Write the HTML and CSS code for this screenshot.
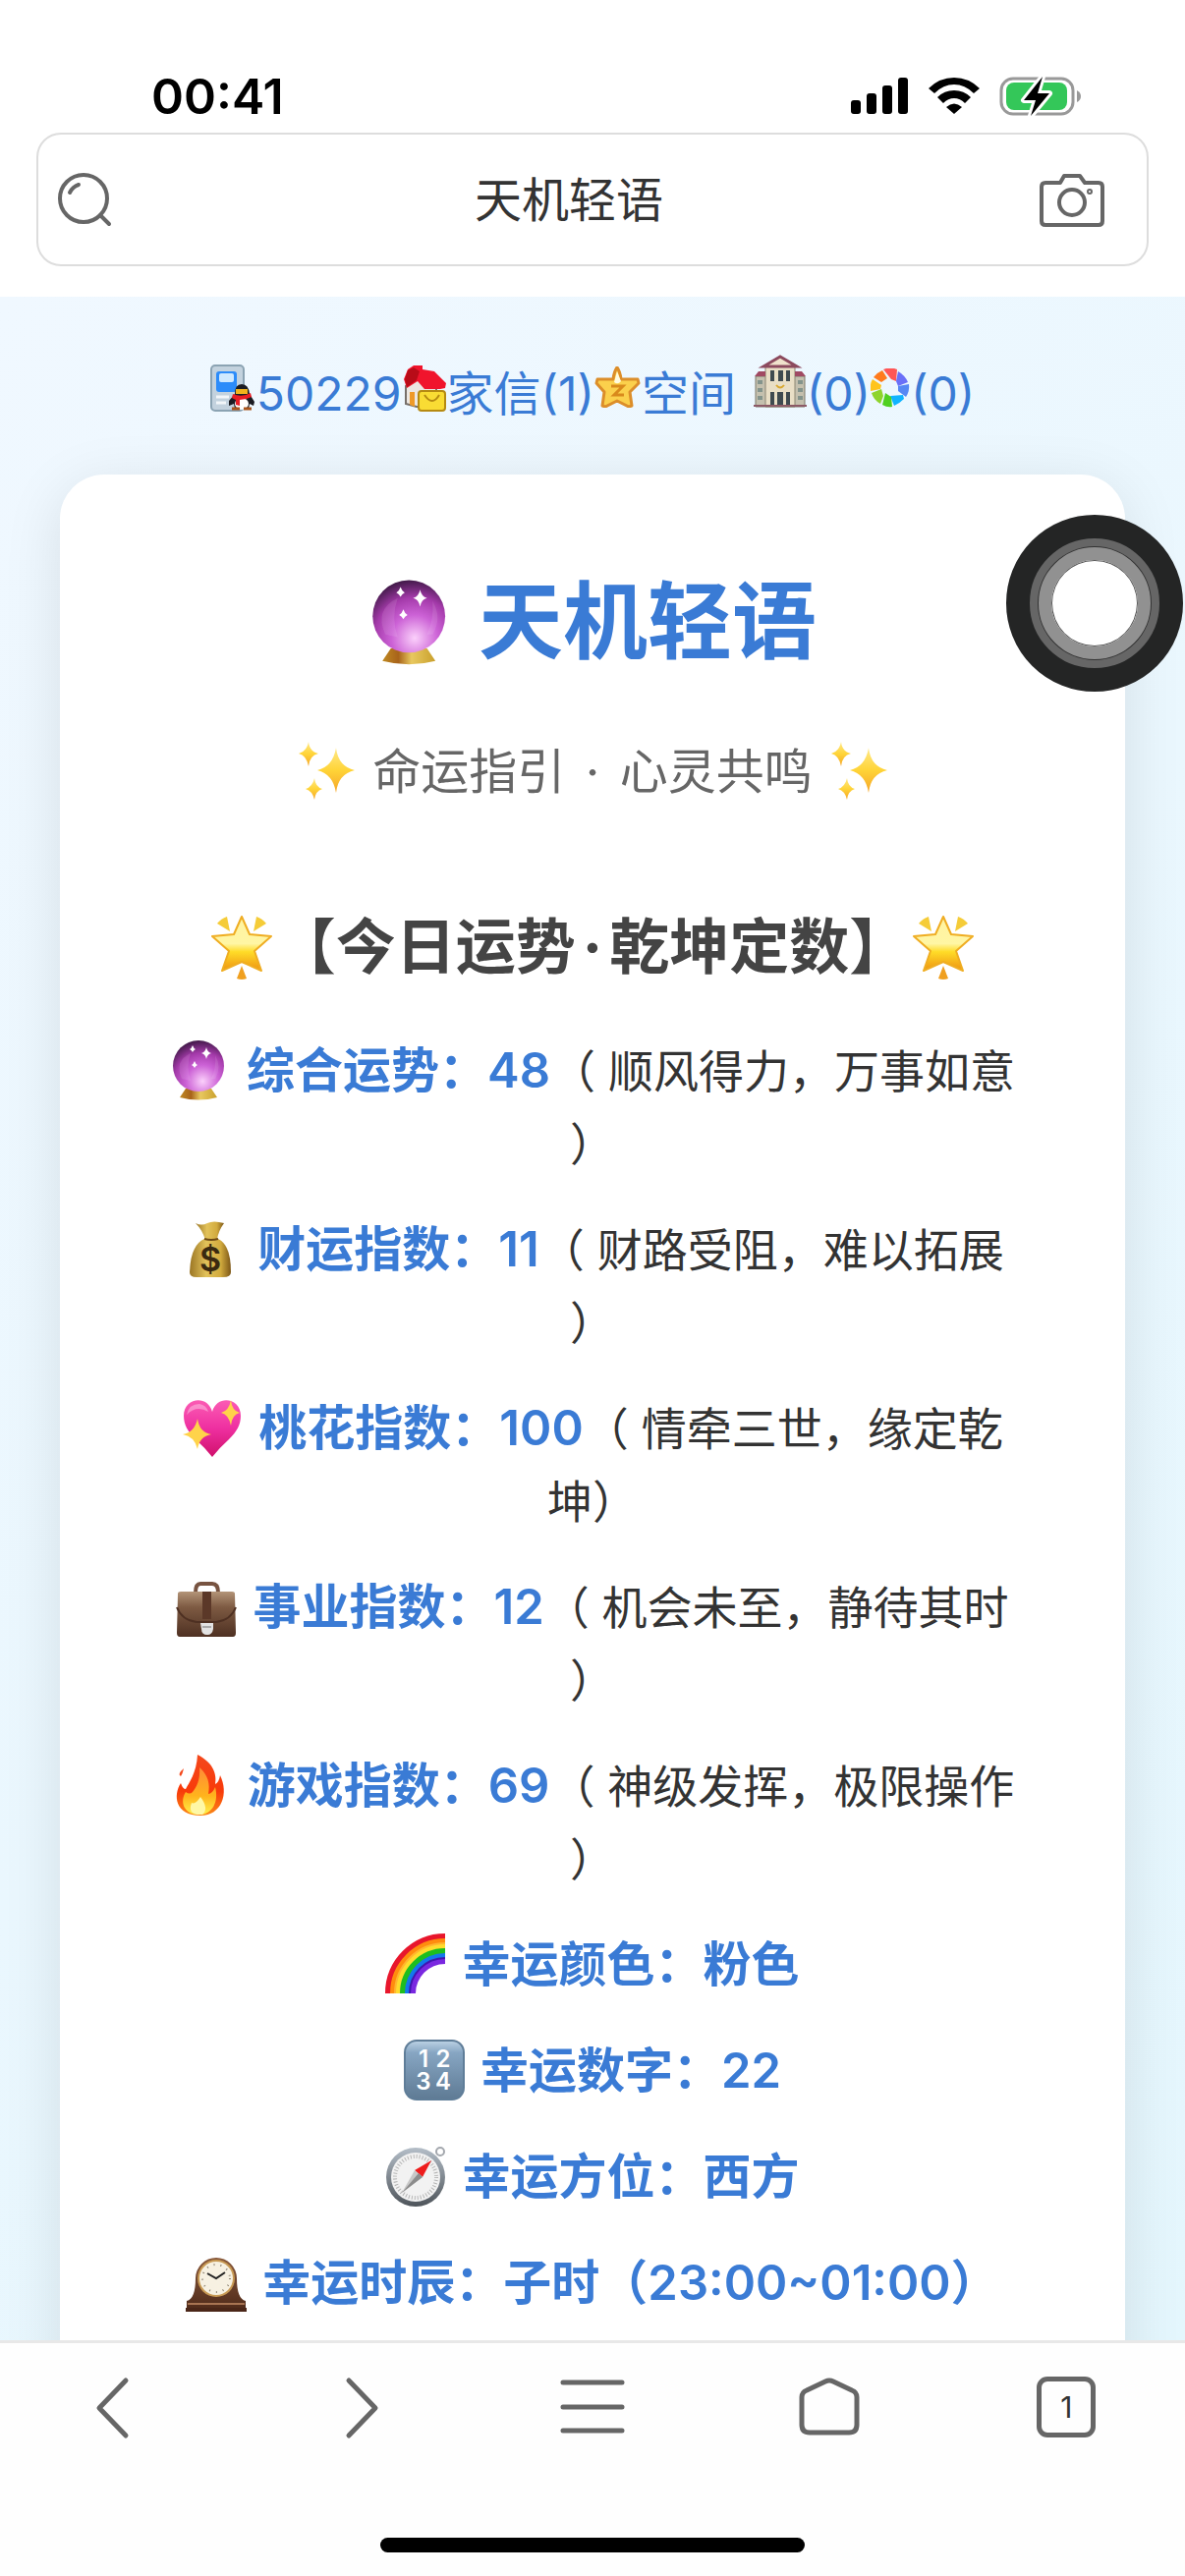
FILE: index.html
```html
<!DOCTYPE html>
<html lang="zh-CN">
<head>
    <meta charset="UTF-8">
    <meta name="viewport" content="width=device-width, initial-scale=1.0">
    <title>天机轻语</title>
    <link rel="stylesheet" href="styles.css">
</head>
<body>
    <!-- shared emoji drawings -->
    <svg class="defs" width="0" height="0" aria-hidden="true">
        <defs>
            <radialGradient id="ballFill" cx="58%" cy="80%" r="80%">
                <stop offset="0" stop-color="#fbd0fb"/>
                <stop offset=".4" stop-color="#cc62d6"/>
                <stop offset=".7" stop-color="#a43aaa"/>
                <stop offset="1" stop-color="#431a4a"/>
            </radialGradient>
            <linearGradient id="gold" x1="0" x2="1" y1="0" y2="0">
                <stop offset="0" stop-color="#c08a22"/>
                <stop offset=".3" stop-color="#a8631a"/>
                <stop offset=".55" stop-color="#e8c860"/>
                <stop offset="1" stop-color="#c9a02c"/>
            </linearGradient>
            <linearGradient id="starFill" x1="0" x2="0" y1="0" y2="1">
                <stop offset="0" stop-color="#fff3a0"/>
                <stop offset=".5" stop-color="#fff6a4"/>
                <stop offset=".65" stop-color="#ffdc28"/>
                <stop offset="1" stop-color="#ee9310"/>
            </linearGradient>
            <linearGradient id="heartFill" x1="0" x2="0" y1="0" y2="1">
                <stop offset="0" stop-color="#fb5cb4"/>
                <stop offset=".5" stop-color="#ee2fa0"/>
                <stop offset="1" stop-color="#d0106c"/>
            </linearGradient>
            <linearGradient id="sparkFill" x1="0" x2="0" y1="0" y2="1">
                <stop offset="0" stop-color="#ffe98a"/>
                <stop offset=".5" stop-color="#ffd437"/>
                <stop offset="1" stop-color="#f5a52a"/>
            </linearGradient>
            <linearGradient id="bagFill" x1="0" x2="1" y1="0" y2="0">
                <stop offset="0" stop-color="#9a7524"/>
                <stop offset=".4" stop-color="#e2c25a"/>
                <stop offset=".75" stop-color="#d2ab3e"/>
                <stop offset="1" stop-color="#7c5616"/>
            </linearGradient>
            <linearGradient id="caseFill" x1="0" x2="0" y1="0" y2="1">
                <stop offset="0" stop-color="#b39478"/>
                <stop offset=".35" stop-color="#7d5a42"/>
                <stop offset="1" stop-color="#4e3022"/>
            </linearGradient>
            <linearGradient id="fireFill" x1="0" x2="0" y1="0" y2="1">
                <stop offset="0" stop-color="#f4481c"/>
                <stop offset=".6" stop-color="#f83a0a"/>
                <stop offset="1" stop-color="#fb8a16"/>
            </linearGradient>
            <linearGradient id="fireInner" x1="0" x2="0" y1="0" y2="1">
                <stop offset="0" stop-color="#ff8a38"/>
                <stop offset=".6" stop-color="#ffb31c"/>
                <stop offset="1" stop-color="#fff04a"/>
            </linearGradient>
            <linearGradient id="keyFill" x1="0" x2="0" y1="0" y2="1">
                <stop offset="0" stop-color="#b8cfe2"/>
                <stop offset=".2" stop-color="#86a5c2"/>
                <stop offset="1" stop-color="#5f7b95"/>
            </linearGradient>
            <linearGradient id="steel" x1="0" x2="0" y1="0" y2="1">
                <stop offset="0" stop-color="#b4bec8"/>
                <stop offset="1" stop-color="#4e545a"/>
            </linearGradient>
            <linearGradient id="woodFill" x1="0" x2="0" y1="0" y2="1">
                <stop offset="0" stop-color="#8a5a3c"/>
                <stop offset="1" stop-color="#4f2a1a"/>
            </linearGradient>
        </defs>

        <symbol id="crystal-ball" viewBox="0 0 62 62">
            <path d="M16 50h26l6 9q-19 5-38 0z" fill="url(#gold)"/>
            <circle cx="29" cy="27" r="26" fill="url(#ballFill)"/>
            <path d="M12 40q-8-18 9-26-5 14 0 28zM46 40q7-12 0-24 1 14-4 24z" fill="#fff" opacity=".1"/>
            <path d="M37 8q1 5 5 6-4 1-5 6-1-5-5-6 4-1 5-6zM23 6q1 3 3 4-2 1-3 3-1-2-3-3 2-1 3-4zM25 22q1 3 3 4-2 1-3 3-1-2-3-3 2-1 3-4z" fill="#fff"/>
        </symbol>

        <symbol id="sparkles" viewBox="0 0 62 62">
            <path d="M41 7q2 19 19 23-17 4-19 23-3-19-19-23 16-4 19-23z" fill="url(#sparkFill)"/>
            <path d="M13 1q1 10 10 12-9 2-10 13-2-11-10-13 8-2 10-12z" fill="url(#sparkFill)"/>
            <path d="M19 38q1 9 8 11-7 2-8 11-2-9-9-11 7-2 9-11z" fill="url(#sparkFill)"/>
        </symbol>

        <symbol id="glowing-star" viewBox="0 0 70 70">
            <path d="M35 4l8 18 22 2-17 15 7 20-20-9-20 9 7-20-17-15 22-2z" fill="url(#starFill)" stroke="#efad22" stroke-width="2" stroke-linejoin="round"/>
            <path d="M20 4l3 15-13-8q4-5 10-7zM50 4l-3 15 13-8q-4-5-10-7z" fill="#f5cc38"/>
            <path d="M35 54l5 13q-5 2-10 0z" fill="#f0a020"/>
        </symbol>

        <symbol id="sparkling-heart" viewBox="0 0 62 62">
            <path d="M31 61q-7-9-17-18c-8-8-12-15-12-24 0-18 24-22 29-4 5-18 29-14 29 4 0 9-4 16-12 24q-10 9-17 18z" fill="url(#heartFill)"/>
            <path d="M5 18q2-11 13-11 7 1 9 8-12-7-22 3z" fill="#fff" opacity=".35"/>
            <path d="M50 3q1 11 9 13-8 2-9 13-2-11-10-13 8-2 10-13z" fill="#ffd34a"/>
            <path d="M16 22q2 14 14 16-12 2-14 15-3-13-15-15 12-2 15-16z" fill="#ffd34a"/>
        </symbol>

        <symbol id="briefcase" viewBox="0 0 62 62">
            <path d="M20 17q0-9 5-9h12q6 0 6 9" fill="none" stroke="#775341" stroke-width="4"/>
            <path d="M2 18q0-2 3-2h52q3 0 3 2l1 40q0 4-3 4h-54q-3 0-3-4z" fill="url(#caseFill)"/>
            <path d="M1 32q5 13 20 15h20q15-2 20-15" fill="none" stroke="#4e3022" stroke-width="2"/>
            <path d="M27 16h9v28h-9z" fill="#5b3828"/>
            <path d="M25 48h13v6q-1 6-6 6-6 0-6-6z" fill="#e3e3e3"/>
            <path d="M27 52h9" stroke="#aaa" stroke-width="2"/>
        </symbol>

        <symbol id="fire" viewBox="0 0 62 62">
            <path d="M27 0c16 8 20 20 18 30q4-2 5-9c9 18 2 41-20 41-26 0-28-21-20-33q2 6 5 6c3-6 11-16 12-35z" fill="url(#fireFill)"/>
            <path d="M13 14q-1 5-3 8-4-2 3-8z" fill="#f4481c"/>
            <path d="M29 13c9 8 11 17 9 27q4 0 7-7c4 15-3 28-16 28-17 0-20-14-14-23q4 3 7 0c4-5 8-12 7-25z" fill="url(#fireInner)"/>
            <path d="M30 43q9 12 2 18-16 1-11-12 4 2 9-6z" fill="#fff8a6"/>
        </symbol>

        <symbol id="rainbow" viewBox="0 0 62 62">
            <g fill="none" stroke-width="6">
                <path d="M3 61A58 58 0 0 1 61 3" stroke="#e8162c"/>
                <path d="M8 61A53 53 0 0 1 61 8" stroke="#ff8c0e"/>
                <path d="M13 61A48 48 0 0 1 61 13" stroke="#ffdc2c"/>
                <path d="M18 61A43 43 0 0 1 61 18" stroke="#1ebe1e"/>
                <path d="M23 61A38 38 0 0 1 61 23" stroke="#1478ec"/>
                <path d="M28 61A33 33 0 0 1 61 28" stroke="#7a28e0"/>
                <path d="M25 61A36 36 0 0 1 61 25" stroke="#4016b0" stroke-width="2"/>
                <path d="M10 61A51 51 0 0 1 61 10" stroke="#ffb62e" stroke-width="2"/>
            </g>
        </symbol>

        <symbol id="compass" viewBox="0 0 62 62">
            <circle cx="56" cy="6" r="4" fill="none" stroke="#a4a8ae" stroke-width="2"/>
            <circle cx="31" cy="32" r="30" fill="url(#steel)"/>
            <circle cx="31" cy="32" r="25" fill="#f2f2f2"/>
            <circle cx="31" cy="32" r="21" fill="none" stroke="#b5b5b5" stroke-width="4" stroke-dasharray="1 2"/>
            <path d="M47 15l-9 17-8-7z" fill="#ee1c1c"/>
            <path d="M17 48l13-23 8 7z" fill="#c8c8c8"/>
            <path d="M17 48l17-20 4 4z" fill="#8c8c8c"/>
        </symbol>

        <symbol id="mantel-clock" viewBox="0 0 62 62">
            <path d="M1 50q9-2 9-23a21 21 0 0 1 42 0q0 21 9 23v9h-60z" fill="url(#woodFill)"/>
            <path d="M2 53h58" stroke="#a87452" stroke-width="2"/>
            <path d="M0 57h62v4h-62z" fill="#4a2618"/>
            <circle cx="31" cy="27" r="19" fill="#c89a54"/>
            <circle cx="31" cy="27" r="17" fill="#f7f1e2"/>
            <circle cx="31" cy="27" r="14" fill="none" stroke="#8c8272" stroke-width="2" stroke-dasharray="1 6"/>
            <path d="M22 22l9 5 9-6" fill="none" stroke="#222" stroke-width="2"/>
        </symbol>
    </svg>

    <header class="header">
        <div class="status">
            <span class="time">00:41</span>
            <div class="status-icons">
                <svg width="60" height="40" viewBox="0 0 60 40">
                    <rect x="1" y="24" width="10" height="14" rx="3"/>
                    <rect x="17" y="17" width="10" height="21" rx="3"/>
                    <rect x="33" y="9" width="10" height="29" rx="3"/>
                    <rect x="49" y="1" width="10" height="37" rx="3"/>
                </svg>
                <svg width="52" height="40" viewBox="0 0 52 40">
                    <path d="M0 12q11-11 26-11t26 11l-6 5q-9-9-20-9t-20 9z"/>
                    <path d="M9 21q7-7 17-7t17 7l-6 6q-5-5-11-5t-11 5z"/>
                    <path d="M18 31q8-7 16 0l-8 7z"/>
                </svg>
                <svg width="84" height="44" viewBox="0 0 84 44">
                    <rect x="2" y="4" width="73" height="36" rx="12" fill="none" stroke="#999" stroke-width="3"/>
                    <path d="M79 16q4 2 4 6t-4 6z" fill="#999"/>
                    <rect x="7" y="8" width="62" height="28" rx="8" fill="#34c759"/>
                    <path d="M44 2L25 26h12L32 42 51 19H39z" stroke="#fff" stroke-width="6" stroke-linejoin="round"/>
                    <path d="M44 2L25 26h12L32 42 51 19H39z"/>
                </svg>
            </div>
        </div>
        <form class="search">
            <label for="q" class="search-icon" aria-label="搜索">
                <svg width="60" height="60" viewBox="0 0 60 60">
                    <circle cx="29" cy="29" r="24"/>
                    <path d="M46 46l9 9M15 23q3-6 9-8"/>
                </svg>
            </label>
            <input type="text" id="q" name="q" value="天机轻语">
            <button type="button" class="camera" aria-label="拍照">
                <svg width="70" height="60" viewBox="0 0 70 60">
                    <path d="M8 13h15l4-7h16l5 7h14q4 0 4 4v35q0 4-4 4H8q-4 0-4-4V17q0-4 4-4z"/>
                    <circle cx="35" cy="33" r="13"/>
                    <circle cx="53" cy="22" r="1"/>
                </svg>
            </button>
        </form>
    </header>

    <main class="page">
        <nav class="links">
            <a href="#"><svg width="47" height="48" viewBox="1 0 47 48">
                <rect x="2" y="1" width="33" height="46" rx="4" fill="#c3d2de" stroke="#8ba3b3" stroke-width="2"/>
                <rect x="7" y="7" width="21" height="21" rx="3" fill="#2c8cfa"/>
                <rect x="10" y="9" width="15" height="9" rx="2" fill="#cfe9ff"/>
                <path d="M7 33h13M7 39h10" stroke="#f2f6f9" stroke-width="3"/>
                <path d="M26 30q0-10 7-10t8 10l5 8-1 4-4-2-1 5H26l-1-5-5 2v-5z" fill="#1c1c22"/>
                <ellipse cx="33" cy="40" rx="7" ry="6" fill="#fff"/>
                <path d="M27 25h12v5H27z" fill="#f2b21c"/>
                <path d="M24 30q9 4 18-1l1 4q-6 3-12 3v6l-4-1v-5l-4-2z" fill="#e81c24"/>
                <path d="M23 45h8M35 45h8" stroke="#a8541c" stroke-width="3"/>
            </svg>50229</a><a href="#"><svg width="46" height="48" viewBox="1 0 46 48">
                <path d="M5 22l13-12 18 11v22H16L5 40z" fill="#ece7e2" stroke="#77706a" stroke-width="2"/>
                <path d="M3 15l4-10 6-4h9v4l12 2 12 12-1 5-5 1H24l-7-8-11 7z" fill="#f0142c"/>
                <path d="M7 6l6-3 6 4-3 9-10 7-2-8z" fill="#b80c18"/>
                <path d="M9 28h5v15l-5-2z" fill="#ef9a28"/>
                <rect x="18" y="27" width="27" height="20" rx="3" fill="#f9dc34" stroke="#b58a12" stroke-width="2"/>
                <path d="M24 31q8 12 15 0" fill="none" stroke="#b58a12" stroke-width="2"/>
            </svg>家信(1)</a><a href="#"><svg class="raised" width="48" height="42" viewBox="0 0 48 42">
                <path d="M23 1q3 4 4 12h17l1 4-9 9 2 14-3 1-12-6-12 6-3-1 2-14-8-9 1-4h16q1-8 4-12z" fill="#fbd04c" stroke="#dc8e2a" stroke-width="3" stroke-linejoin="round"/>
                <path d="M23 5l-3 11q4 3 7-1z" fill="#fffbe0"/>
                <path d="M17 20h12l-9 9h10" fill="none" stroke="#d98a1c" stroke-width="3"/>
            </svg>空间</a>
            <a href="#" class="school"><svg class="raised" width="54" height="54" viewBox="0 0 54 54">
                <path d="M2 22h50v31H2z" fill="#c4c0ae" stroke="#7c7868" stroke-width="1"/>
                <path d="M12 12h30v41H12z" fill="#e9dfc6" stroke="#8c8672" stroke-width="1"/>
                <path d="M10 12L27 2l17 10z" fill="#f0e2cc" stroke="#8c4a5e" stroke-width="3"/>
                <path d="M1 22l4-5h7v5zM53 22l-4-5h-7v5z" fill="#a04a62"/>
                <path d="M17 16h4v11h-4zM25 16h5v11h-5zM33 16h4v11h-4zM17 38h4v14h-4zM24 38h6v14h-6zM33 38h4v14h-4z" fill="#3e4a50"/>
                <path d="M4 28h5M45 28h5M4 36h5M45 36h5M4 44h5M45 44h5" stroke="#84948c" stroke-width="4"/>
                <path d="M23 31q4 5 8 0" fill="none" stroke="#d8a830" stroke-width="2"/>
                <path d="M0 52h54" stroke="#8c5a66" stroke-width="2"/>
            </svg>(0)</a><a href="#"><svg class="raised" width="41" height="40" viewBox="2 0 41 40">
                <path d="M15 1q7-3 14 0l-1 12-5-2z" fill="#ff5656"/>
                <path d="M30 3q7 4 10 11l-10 4-2-5z" fill="#6a70f8"/>
                <path d="M41 16q1 7-3 13l-8-6v-5z" fill="#5688f4"/>
                <path d="M36 31q-5 5-10 7l-4-10 13-1z" fill="#10b4ff"/>
                <path d="M24 39q-5 1-10-2l3-12 6 4z" fill="#50d020"/>
                <path d="M12 36q-7-4-9-11l10-4 2 7z" fill="#8ed42c"/>
                <path d="M2 23q-1-7 2-12l9 6-1 4z" fill="#ffc41c"/>
                <path d="M5 9q4-5 9-7l5 8-6 4z" fill="#ff7a1c"/>
            </svg>(0)</a>
        </nav>

        <section class="card">
            <h1><svg class="emoji"><use href="#crystal-ball"/></svg>天机轻语</h1>
            <p class="subtitle"><svg class="emoji"><use href="#sparkles"/></svg>命运指引<span class="dot"> · </span>心灵共鸣<svg class="emoji after"><use href="#sparkles"/></svg></p>

            <h2><svg class="emoji"><use href="#glowing-star"/></svg>【今日运势<span class="dot">·</span>乾坤定数】<svg class="emoji"><use href="#glowing-star"/></svg></h2>

            <div class="result">
                <p><svg class="emoji"><use href="#crystal-ball"/></svg><strong>综合运势：48</strong><span>（ 顺风得力，万事如意）</span></p>
                <p><svg class="emoji" viewBox="0 0 62 62">
                    <path d="M15 5q6 3 12 0t17 0q-6 8-7 17h-12q-3-10-10-17z" fill="url(#bagFill)"/>
                    <path d="M24 21h14q13 6 13 34 0 5-8 5h-27q-7 0-7-5 1-28 15-34z" fill="url(#bagFill)"/>
                    <path d="M24 21q7 2 14 0" fill="none" stroke="#6e4a14" stroke-width="2"/>
                    <text x="30" y="54" class="bag-sign">$</text>
                </svg><strong>财运指数：11</strong><span>（ 财路受阻，难以拓展）</span></p>
                <p><svg class="emoji"><use href="#sparkling-heart"/></svg><strong>桃花指数：100</strong><span>（ 情牵三世，缘定乾坤）</span></p>
                <p><svg class="emoji"><use href="#briefcase"/></svg><strong>事业指数：12</strong><span>（ 机会未至，静待其时）</span></p>
                <p><svg class="emoji"><use href="#fire"/></svg><strong>游戏指数：69</strong><span>（ 神级发挥，极限操作）</span></p>
                <p><svg class="emoji"><use href="#rainbow"/></svg><strong>幸运颜色：粉色</strong></p>
                <p><svg class="emoji" viewBox="0 0 62 62">
                    <rect x="0" y="0" width="62" height="62" rx="13" fill="#5f7d98"/>
                    <rect x="2" y="2" width="58" height="58" rx="11" fill="url(#keyFill)"/>
                    <g class="key-digits">
                        <text x="20" y="28">1</text>
                        <text x="40" y="28">2</text>
                        <text x="20" y="51">3</text>
                        <text x="40" y="51">4</text>
                    </g>
                </svg><strong>幸运数字：22</strong></p>
                <p><svg class="emoji"><use href="#compass"/></svg><strong>幸运方位：西方</strong></p>
                <p><svg class="emoji"><use href="#mantel-clock"/></svg><strong>幸运时辰：子时（23:00~01:00）</strong></p>
            </div>
        </section>
    </main>

    <footer class="toolbar">
        <div class="tools">
            <button type="button" aria-label="后退">
                <svg width="70" height="70" viewBox="0 0 70 70"><path d="M42 8L15 36l27 28"/></svg>
            </button>
            <button type="button" aria-label="前进">
                <svg width="70" height="70" viewBox="0 0 70 70"><path d="M28 8l27 28-27 28"/></svg>
            </button>
            <button type="button" aria-label="菜单">
                <svg width="70" height="70" viewBox="0 0 70 70"><path d="M5 10h60M5 35h60M5 59h60"/></svg>
            </button>
            <button type="button" aria-label="主页">
                <svg width="70" height="70" viewBox="0 0 70 70"><path d="M31 9q4-2 8 0l19 9q5 2 5 7v28q0 8-8 8H15q-8 0-8-8V25q0-5 5-7z"/></svg>
            </button>
            <button type="button" class="tabs"><span>1</span></button>
        </div>
        <div class="home-bar"></div>
    </footer>

    <button type="button" class="touch" aria-label="辅助触控"><span></span></button>
</body>
</html>
```

FILE: styles.css
```css
* {
    box-sizing: border-box;
}
body {
    margin: 0;
    height: 100vh;
    display: flex;
    flex-direction: column;
    font-family: Inter, "Noto Sans CJK SC", sans-serif;
    font-size: 48px;
    color: #333;
    background: #fefefe;
    text-spacing-trim: space-all;
}
button {
    padding: 0;
    border: none;
    background: none;
    font-family: inherit;
    cursor: pointer;
}
h1, h2, p {
    margin: 0;
}
.defs {
    position: absolute;
}

/* top bar */
.header {
    padding: 0 37px 31px;
    background: #fff;
}
.status {
    display: flex;
    justify-content: space-between;
    height: 135px;
    padding: 60px 68px 0 117px;
}
.time {
    color: #000;
    font-size: 50px;
    font-weight: 600;
    line-height: 76px;
}
.status-icons {
    display: flex;
    align-items: center;
    gap: 20px;
    height: 76px;
}
.search {
    display: grid;
    grid-template-columns: 91px 1fr 139px;
    align-items: center;
    height: 136px;
    border: 2px solid #ddd;
    border-radius: 25px;
}
.search svg {
    display: block;
    fill: none;
    stroke: #666;
    stroke-width: 4;
    stroke-linecap: round;
    stroke-linejoin: round;
}
.search-icon {
    padding-left: 17px;
}
.search input {
    width: 100%;
    padding: 0 0 6px;
    border: none;
    outline: none;
    background: none;
    color: #333;
    font-family: inherit;
    font-size: 48px;
    text-align: center;
}
.camera {
    padding-left: 28px;
}

/* page */
.page {
    flex: 1;
    min-height: 0;
    overflow-y: auto;
    scrollbar-width: none;
    padding: 59px 61px;
    background: linear-gradient(135deg, #f0f8ff, #e4f6fd);
}
.links {
    height: 122px;
    line-height: 78px;
    text-align: center;
}
.links a {
    color: #3a7bd5;
    text-decoration: none;
}
.links svg {
    vertical-align: -1px;
}
.links .raised {
    vertical-align: 3px;
}
.links .school {
    margin-left: 4px;
}
.card {
    padding: 90px 106px;
    border-radius: 45px;
    background: #fff;
    box-shadow: 0 12px 60px rgba(0, 0, 0, 0.1);
    text-align: center;
}
.emoji {
    width: 62px;
    height: 62px;
    margin-right: 16px;
    vertical-align: -13px;
}
.emoji.after {
    margin: 0 0 0 16px;
}
h1 {
    color: #3a7bd5;
    font-size: 86px;
    line-height: 120px;
}
h1 .emoji {
    width: 88px;
    height: 88px;
    margin-right: 24px;
}
.subtitle {
    margin-top: 54px;
    color: #666;
    font-size: 49px;
    line-height: 78px;
}
.dot {
    padding: 0 7px;
}
h2 {
    margin: 90px 0 40px;
    color: #444;
    font-size: 61px;
    line-height: 98px;
    white-space: nowrap;
}
h2 .emoji {
    width: 70px;
    height: 70px;
    margin: 0;
}
.result p {
    margin-bottom: 34px;
    font-size: 46px;
    line-height: 74px;
    line-break: anywhere;
}
.result strong {
    color: #3a7bd5;
    font-size: 49px;
    font-weight: 600;
}
.bag-sign {
    fill: #3a2a10;
    font-size: 34px;
    font-weight: 600;
    text-anchor: middle;
}
.key-digits {
    fill: #fff;
    font-size: 24px;
    font-weight: 600;
    text-anchor: middle;
}

/* bottom bar */
.toolbar {
    padding-bottom: 24px;
    border-top: 3px solid #e8e8e8;
    background: #fefefe;
}
.tools {
    display: grid;
    grid-template-columns: repeat(5, 1fr);
    align-items: center;
    justify-items: center;
    height: 130px;
    margin-bottom: 68px;
}
.tools svg {
    display: block;
    fill: none;
    stroke: #666;
    stroke-width: 5;
    stroke-linecap: round;
    stroke-linejoin: round;
}
.tabs {
    width: 60px;
    height: 62px;
    border: 5px solid #666;
    border-radius: 11px;
    color: #333;
    font-size: 30px;
}
.home-bar {
    width: 432px;
    height: 15px;
    margin: 0 auto;
    border-radius: 8px;
    background: #000;
}

/* floating touch button */
.touch {
    position: fixed;
    top: 524px;
    right: 2px;
    display: grid;
    place-items: center;
    width: 180px;
    height: 180px;
    border: 24px solid #242525;
    border-radius: 50%;
    background: #666;
}
.touch span {
    width: 114px;
    height: 114px;
    border: 13px solid #919191;
    border-radius: 50%;
    background: #fff;
    box-shadow: 0 0 0 1px #333, inset 0 0 0 1px #555;
}
```
